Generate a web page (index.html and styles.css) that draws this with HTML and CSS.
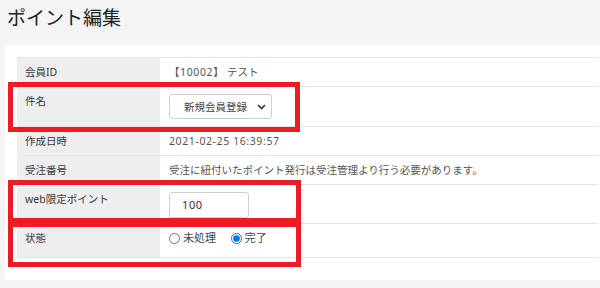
FILE: index.html
```html
<!DOCTYPE html>
<html lang="ja">
<head>
<meta charset="utf-8">
<title>ポイント編集</title>
<link rel="stylesheet" href="styles.css">
</head>
<body>
<h1 class="page-title">ポイント編集</h1>
<div class="panel">
  <table class="form-table">
    <tr class="row">
      <th>会員ID</th>
      <td><span class="num">【10002】</span> テスト</td>
    </tr>
    <tr class="row row-select">
      <th>件名</th>
      <td>
        <div class="select-box">
          <span class="select-text">新規会員登録</span>
          <svg class="chev" width="9" height="6" viewBox="0 0 9 6"><path d="M1 1 L4.5 4.5 L8 1" fill="none" stroke="#333" stroke-width="1.6"/></svg>
        </div>
      </td>
    </tr>
    <tr class="row">
      <th>作成日時</th>
      <td><span class="num">2021-02-25 16:39:57</span></td>
    </tr>
    <tr class="row">
      <th>受注番号</th>
      <td>受注に紐付いたポイント発行は受注管理より行う必要があります。</td>
    </tr>
    <tr class="row row-input">
      <th>web限定ポイント</th>
      <td><div class="text-input"><span class="num">100</span></div></td>
    </tr>
    <tr class="row row-radio">
      <th>状態</th>
      <td>
        <label class="radio"><input type="radio" name="st"> 未処理</label>
        <label class="radio"><input type="radio" name="st" checked> 完了</label>
      </td>
    </tr>
  </table>
</div>
<div class="mark mark-1"></div>
<div class="mark mark-2"></div>
<div class="mark mark-3"></div>
</body>
</html>
```
FILE: styles.css
```css
html, body {
  margin: 0;
  padding: 0;
}
body {
  background: #f4f4f4;
  font-family: "Noto Sans", "Noto Sans CJK JP", sans-serif;
  color: #333;
  width: 600px;
  height: 288px;
  overflow: hidden;
  position: relative;
}
.page-title {
  margin: 0 0 15px 0;
  padding: 6px 0 0 7px;
  font-size: 19px;
  line-height: 24px;
  font-weight: normal;
  color: #222;
}
.panel {
  margin-left: 5px;
  background: #fff;
  padding: 12px 1px 22px 12px;
}
.form-table {
  width: 100%;
  border-collapse: collapse;
  border-top: 1px solid #e4e4e4;
  font-size: 10.5px;
}
.form-table th,
.form-table td {
  border-bottom: 1px solid #e4e4e4;
  padding: 6px 8px;
  line-height: 16px;
  vertical-align: top;
  text-align: left;
  font-weight: normal;
}
.form-table th {
  width: 127px;
  background: #eeeeee;
  color: #3a3a3a;
}
.form-table td {
  color: #555;
  padding-left: 9px;
}
.num {
  letter-spacing: 0.6px;
}
.row-select td,
.row-select th {
  padding-bottom: 7px;
}
.select-box {
  margin-top: 1px;
  border: 1px solid #cfcfcf;
  border-radius: 3px;
  display: flex;
  align-items: center;
  justify-content: space-between;
  padding: 0 5px 0 14px;
  box-sizing: border-box;
  width: 103px;
  height: 25px;
  font-size: 10.5px;
  color: #444;
}
.chev {
  display: block;
}
.text-input {
  margin-top: 1px;
  width: 80px;
  height: 26px;
  box-sizing: border-box;
  border: 1px solid #cfcfcf;
  border-radius: 3px;
  padding-left: 12px;
  display: flex;
  align-items: center;
  font-size: 11px;
  color: #333;
}
.row-input td,
.row-input th {
  padding-bottom: 5px;
}
.row-radio td,
.row-radio th {
  padding-bottom: 9px;
}
.radio {
  display: inline-flex;
  align-items: center;
  margin-right: 12px;
  font-size: 11px;
  color: #444;
}
.radio input {
  width: 11px;
  height: 11px;
  margin: 0 3px 0 0;
}
.mark {
  position: absolute;
  border: 5px solid #ec1c24;
  box-sizing: border-box;
  left: 8px;
}
.mark-1 {
  top: 82px;
  width: 292px;
  height: 50px;
}
.mark-2 {
  top: 180px;
  width: 293px;
  height: 43px;
}
.mark-3 {
  top: 222px;
  width: 293px;
  height: 45px;
}
```
